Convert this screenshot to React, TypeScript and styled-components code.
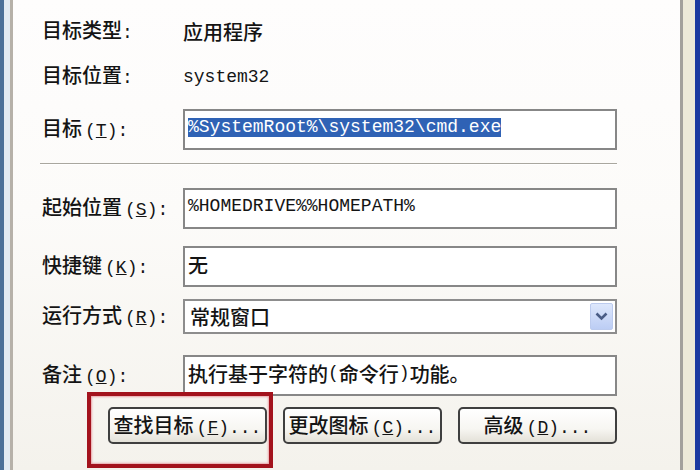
import * as React from "react";
import styled, { createGlobalStyle } from "styled-components";

const GlobalStyle = createGlobalStyle`
  html, body {
    margin: 0;
    padding: 0;
    overflow: hidden;
  }
  body {
    font-family: "Noto Sans CJK SC", "Liberation Sans", sans-serif;
    color: #141414;
  }
`;

const cjk = `"Noto Sans CJK SC", "Liberation Sans", sans-serif`;
const mono = `"Liberation Mono", "Noto Sans CJK SC", monospace`;

// mnemonic like (S): drawn as half-width text
const Hot: React.FC<{ k?: string; dots?: boolean; colon?: boolean }> = ({
  k,
  dots,
  colon,
}) => (
  <Ascii $spaced={!!k}>
    {k && (
      <>
        (<u>{k}</u>)
      </>
    )}
    {colon && ":"}
    {dots && "..."}
  </Ascii>
);

const App: React.FC = () => {
  return (
    <Window>
      <GlobalStyle />
      <TabPage>
        <Row $gap={0} $h={24}>
          <Label>
            目标类型
            <Hot colon />
          </Label>
          <Static>应用程序</Static>
        </Row>
        <Row $gap={21} $h={24}>
          <Label>
            目标位置
            <Hot colon />
          </Label>
          <Static $mono>system32</Static>
        </Row>
        <Row $gap={22} $h={41}>
          <Label>
            目标
            <Hot k="T" colon />
          </Label>
          <Field $mono>
            <Selected>%SystemRoot%\system32\cmd.exe</Selected>
          </Field>
        </Row>

        <Separator />

        <Row $gap={23} $h={41}>
          <Label>
            起始位置
            <Hot k="S" colon />
          </Label>
          <Field $mono>%HOMEDRIVE%%HOMEPATH%</Field>
        </Row>
        <Row $gap={17} $h={41}>
          <Label>
            快捷键
            <Hot k="K" colon />
          </Label>
          <Field>无</Field>
        </Row>
        <Row $gap={12} $h={35}>
          <Label>
            运行方式
            <Hot k="R" colon />
          </Label>
          <Combo>
            <ComboText>常规窗口</ComboText>
            <DropButton>
              <svg width="13" height="9" viewBox="0 0 13 9">
                <path
                  d="M1.5 1.5 L6.5 6.5 L11.5 1.5"
                  fill="none"
                  stroke="#4a5d86"
                  strokeWidth="2.6"
                />
              </svg>
            </DropButton>
          </Combo>
        </Row>
        <Row $gap={21} $h={41}>
          <Label>
            备注
            <Hot k="O" colon />
          </Label>
          <Field>
            执行基于字符的<Ascii>(</Ascii>命令行<Ascii>)</Ascii>功能。
          </Field>
        </Row>

        <ButtonRow>
          <Marked>
            <Button>
              查找目标
              <Hot k="F" dots />
            </Button>
            <RedBox />
          </Marked>
          <Button>
            更改图标
            <Hot k="C" dots />
          </Button>
          <Button>
            高级
            <Hot k="D" dots />
          </Button>
        </ButtonRow>
      </TabPage>
    </Window>
  );
};

const Window = styled.div`
  width: 700px;
  height: 470px;
  box-sizing: border-box;
  display: flex;
  border-left: 4px solid #4b7098;
  border-right: 5px solid #1b3aa0;
  background: linear-gradient(to right, #e2eaf2 0 6px, #ece9d8 6px);
`;

const TabPage = styled.div`
  flex: 1;
  display: flex;
  flex-direction: column;
  margin: 0 12px 0 6px;
  padding: 18px 0 0 29px;
  border-left: 3px solid #b6b1a9;
  border-right: 3px solid #a2a09b;
  background: linear-gradient(#fefdfd 0%, #fcfbf9 45%, #f4f2ec 100%);
`;

const Row = styled.div<{ $gap: number; $h: number }>`
  display: grid;
  grid-template-columns: 141px 434px;
  align-items: center;
  margin-top: ${(p) => p.$gap}px;
  height: ${(p) => p.$h}px;
`;

const Label = styled.span`
  font-family: ${cjk};
  font-size: 20px;
  font-weight: 500;
  line-height: 24px;
  white-space: nowrap;
`;

const Ascii = styled.span<{ $spaced?: boolean }>`
  font-family: ${mono};
  font-size: 18px;
  font-weight: 400;
  margin-left: ${(p) => (p.$spaced ? 3 : 0)}px;
`;

const Static = styled.span<{ $mono?: boolean }>`
  font-family: ${(p) => (p.$mono ? mono : cjk)};
  font-size: ${(p) => (p.$mono ? 18 : 20)}px;
  font-weight: ${(p) => (p.$mono ? 400 : 500)};
  line-height: 24px;
`;

const Field = styled.div<{ $mono?: boolean }>`
  height: 100%;
  box-sizing: border-box;
  display: flex;
  align-items: center;
  padding: 0 0 5px 3px;
  border: 2px solid #878787;
  background: #fff;
  font-family: ${(p) => (p.$mono ? mono : cjk)};
  font-size: ${(p) => (p.$mono ? 18 : 20)}px;
  font-weight: ${(p) => (p.$mono ? 400 : 500)};
  white-space: nowrap;
`;

const Selected = styled.span`
  background: #2f62b5;
  color: #fff;
  line-height: 19px;
`;

const Separator = styled.div`
  width: 577px;
  margin: 13px 0 0 -2px;
  border-top: 1px solid #a9a79f;
  border-bottom: 1px solid #fff;
`;

const Combo = styled.div`
  height: 100%;
  box-sizing: border-box;
  display: flex;
  align-items: center;
  justify-content: space-between;
  padding: 2px 2px 2px 5px;
  border: 2px solid #8d8d8d;
  background: #fff;
`;

const ComboText = styled.span`
  font-family: ${cjk};
  font-size: 20px;
  font-weight: 500;
  line-height: 24px;
`;

const DropButton = styled.div`
  width: 23px;
  height: 100%;
  box-sizing: border-box;
  display: flex;
  align-items: center;
  justify-content: center;
  border: 1px solid #bccbee;
  border-radius: 2px;
  background: linear-gradient(#dde7fc, #bccdf4);
`;

const ButtonRow = styled.div`
  display: flex;
  gap: 16px;
  margin: 11px 0 0 66px;
  height: 37px;
`;

const Marked = styled.div`
  position: relative;
  display: flex;
`;

const Button = styled.button`
  width: 159px;
  height: 37px;
  padding: 0 0 2px;
  box-sizing: border-box;
  border: 2px solid #3f3f3f;
  border-radius: 5px;
  background: linear-gradient(#ffffff 0%, #f7f6f2 60%, #e3e1d8 100%);
  color: #141414;
  font-family: ${cjk};
  font-size: 20px;
  font-weight: 500;
  white-space: nowrap;
`;

// annotation drawn on top of the screenshot
const RedBox = styled.div`
  position: absolute;
  left: -21px;
  top: -15px;
  width: 186px;
  height: 76px;
  box-sizing: border-box;
  border: 4px solid #a3131d;
  box-shadow: inset 0 0 2px 1px #e9a3a8;
  pointer-events: none;
`;

export default App;
